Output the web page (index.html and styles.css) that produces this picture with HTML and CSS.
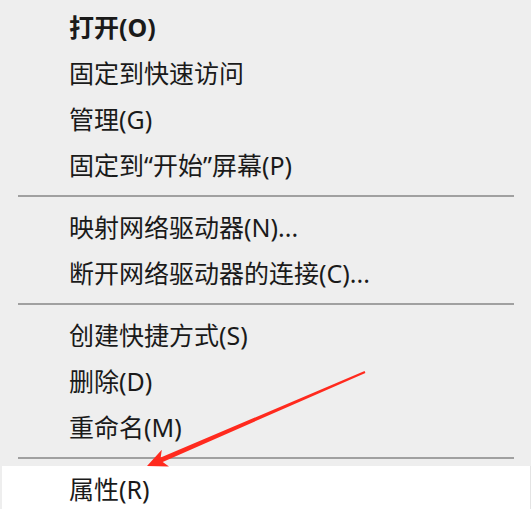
FILE: index.html
```html
<!DOCTYPE html>
<html lang="zh-CN">
<head>
<meta charset="utf-8">
<title>Context menu</title>
<link rel="stylesheet" href="styles.css">
</head>
<body>
<div class="menu">
  <div class="item bold">打开(O)</div>
  <div class="item">固定到快速访问</div>
  <div class="item">管理(G)</div>
  <div class="item">固定到“开始”屏幕(P)</div>
  <div class="sep"></div>
  <div class="item">映射网络驱动器(N)...</div>
  <div class="item">断开网络驱动器的连接(C)...</div>
  <div class="sep"></div>
  <div class="item">创建快捷方式(S)</div>
  <div class="item">删除(D)</div>
  <div class="item">重命名(M)</div>
  <div class="sep"></div>
  <div class="item active">属性(R)</div>
  <svg class="arrow" width="531" height="509" viewBox="0 0 531 509">
    <polygon fill="#ff2a1e" points="364.6,371.1 160.7,457.4 161.8,449.8 147,466 169,466.4 162.7,462 365.4,372.9"/>
  </svg>
</div>
</body>
</html>
```
FILE: styles.css
```css
html, body {
  margin: 0;
  padding: 0;
  background: #eeeeee;
}
.menu {
  position: relative;
  width: 531px;
  height: 509px;
  overflow: hidden;
  background: #eeeeee;
  padding-top: 4px;
  box-sizing: border-box;
  font-family: "Segoe UI", "Noto Sans", "Noto Sans CJK SC", sans-serif;
  color: #1a1a1a;
}
.item {
  height: 46px;
  line-height: 46px;
  padding-left: 69px;
  font-size: 25px;
  white-space: nowrap;
}
.bold {
  font-weight: bold;
}
.sep {
  height: 2px;
  margin: 7px 17px 7px 18px;
  background: #a0a0a0;
}
.active {
  margin-left: 2px;
  padding-left: 67px;
  background: #ffffff;
  border-right: 1px solid #e4e4e4;
  height: 46px;
}
.arrow {
  position: absolute;
  left: 0;
  top: 0;
  pointer-events: none;
}
```
